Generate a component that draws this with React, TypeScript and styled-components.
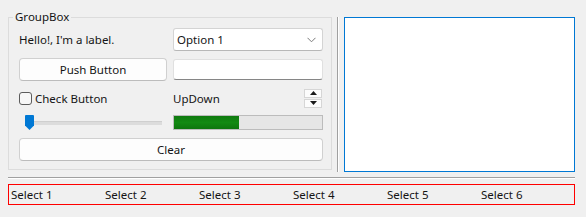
import React from "react";
import styled, { createGlobalStyle } from "styled-components";

const GlobalStyle = createGlobalStyle`
  html, body {
    margin: 0;
    padding: 0;
    background: #f0f0f0;
  }
  body {
    font-family: "Noto Sans", "Open Sans", sans-serif;
    font-size: 11.5px;
    color: #141414;
  }
`;

const Window = styled.div`
  width: 586px;
  height: 217px;
  box-sizing: border-box;
  padding: 9px 11px 0 8px;
  display: flex;
  flex-direction: column;
  overflow: hidden;
`;

const TopRow = styled.div`
  display: flex;
  align-items: flex-start;
  width: 567px;
`;

const GroupBox = styled.fieldset`
  margin: 0;
  flex: none;
  width: 324px;
  box-sizing: border-box;
  border: 1px solid #dcdcdc;
  padding: 3px 8px 9px 10px;
  min-width: 0;
`;

const Legend = styled.legend`
  margin-left: -6px;
  padding: 0 2px;
  line-height: 16px;
`;

const Grid = styled.div`
  display: grid;
  grid-template-columns: 148px 150px;
  grid-template-rows: 23px 23px 20px 15px 23px;
  column-gap: 6px;
  row-gap: 7px;
  align-items: center;
`;

const Label = styled.span`
  white-space: nowrap;
`;

const ComboBox = styled.div`
  height: 23px;
  box-sizing: border-box;
  background: #ffffff;
  border: 1px solid #d4d4d4;
  border-bottom-color: #b8b8b8;
  border-radius: 3px;
  display: flex;
  align-items: center;
  justify-content: space-between;
  padding: 0 6px 0 3px;
`;

const PushButton = styled.button<{ $span?: boolean }>`
  height: 23px;
  box-sizing: border-box;
  background: #fdfdfd;
  border: 1px solid #d0d0d0;
  border-bottom-color: #bcbcbc;
  border-radius: 4px;
  font-family: inherit;
  font-size: inherit;
  color: #141414;
  padding: 0;
  grid-column: ${(p) => (p.$span ? "1 / span 2" : "auto")};
  margin-top: ${(p) => (p.$span ? "2px" : "0")};
`;

const LineEdit = styled.div`
  height: 21px;
  box-sizing: border-box;
  background: #ffffff;
  border: 1px solid #e0e0e0;
  border-bottom: 1px solid #868686;
  border-radius: 3px;
`;

const CheckRow = styled.label`
  display: flex;
  align-items: center;
  gap: 3px;
  white-space: nowrap;
`;

const CheckBox = styled.span`
  width: 13px;
  height: 13px;
  box-sizing: border-box;
  border: 1px solid #5c5c5c;
  border-radius: 3px;
  background: #f7f7f7;
`;

const SpinRow = styled.div`
  display: flex;
  align-items: center;
  justify-content: space-between;
  padding-right: 1px;
`;

const SpinButtons = styled.div`
  display: flex;
  flex-direction: column;
  gap: 1px;
`;

const SpinButton = styled.div`
  width: 18px;
  height: 9px;
  box-sizing: border-box;
  background: #fcfcfc;
  border: 1px solid #d6d6d6;
  display: flex;
  align-items: center;
  justify-content: center;
`;

const Slider = styled.div`
  position: relative;
  height: 15px;
  margin-left: 6px;
  margin-right: 5px;
  display: flex;
  align-items: center;
`;

const Groove = styled.div`
  flex: 1;
  height: 3px;
  background: #dcdcdc;
  border-top: 1px solid #cfcfcf;
`;

const Handle = styled.svg`
  position: absolute;
  left: 0;
  top: 0;
`;

const Progress = styled.div`
  height: 15px;
  box-sizing: border-box;
  border: 1px solid #bcbcbc;
  background: #e6e6e6;
  display: flex;
`;

const ProgressFill = styled.div`
  height: 100%;
  background: linear-gradient(#0f7a0f, #138a13 50%, #0e760e);
`;

const VSeparator = styled.div`
  flex: none;
  width: 1px;
  height: 155px;
  margin: 8px 5px 0 5px;
  background: #a0a0a0;
  border-right: 1px solid #ffffff;
`;

const TextArea = styled.div`
  flex: none;
  width: 231px;
  height: 155px;
  margin-top: 8px;
  box-sizing: border-box;
  background: #ffffff;
  border: 1px solid #0078d4;
`;

const HSeparator = styled.div`
  width: 567px;
  height: 1px;
  margin-top: 5px;
  background: #a0a0a0;
  border-bottom: 1px solid #ffffff;
`;

const SelectBar = styled.div`
  width: 567px;
  margin-top: 5px;
  height: 21px;
  box-sizing: border-box;
  border: 1px solid #ff0000;
  display: grid;
  grid-template-columns: repeat(6, 94px);
  align-items: center;
`;

const SelectItem = styled.span`
  padding-left: 2px;
  white-space: nowrap;
`;

const Chevron = () => (
  <svg width="9" height="6" viewBox="0 0 9 6">
    <path d="M0.5 0.8 L4.5 4.8 L8.5 0.8" fill="none" stroke="#7a7a7a" strokeWidth="1" />
  </svg>
);

const Arrow = ({ up }: { up?: boolean }) => (
  <svg width="7" height="4" viewBox="0 0 7 4">
    <path d={up ? "M3.5 0 L7 4 L0 4 Z" : "M0 0 L7 0 L3.5 4 Z"} fill="#1a1a1a" />
  </svg>
);

const App = () => {
  const progress = 44;
  const selects = ["Select 1", "Select 2", "Select 3", "Select 4", "Select 5", "Select 6"];

  return (
    <>
      <GlobalStyle />
      <Window>
        <TopRow>
          <GroupBox>
            <Legend>GroupBox</Legend>
            <Grid>
              <Label>Hello!, I'm a label.</Label>
              <ComboBox>
                <span>Option 1</span>
                <Chevron />
              </ComboBox>
              <PushButton>Push Button</PushButton>
              <LineEdit />
              <CheckRow>
                <CheckBox />
                Check Button
              </CheckRow>
              <SpinRow>
                <span>UpDown</span>
                <SpinButtons>
                  <SpinButton>
                    <Arrow up />
                  </SpinButton>
                  <SpinButton>
                    <Arrow />
                  </SpinButton>
                </SpinButtons>
              </SpinRow>
              <Slider>
                <Groove />
                <Handle width="9" height="15" viewBox="0 0 9 15">
                  <path d="M1 0 H8 Q9 0 9 1 V10.5 L4.5 15 L0 10.5 V1 Q0 0 1 0 Z" fill="#0078d4" />
                </Handle>
              </Slider>
              <Progress>
                <ProgressFill style={{ width: `${progress}%` }} />
              </Progress>
              <PushButton $span>Clear</PushButton>
            </Grid>
          </GroupBox>
          <VSeparator />
          <TextArea />
        </TopRow>
        <HSeparator />
        <SelectBar>
          {selects.map((s) => (
            <SelectItem key={s}>{s}</SelectItem>
          ))}
        </SelectBar>
      </Window>
    </>
  );
};

export default App;
